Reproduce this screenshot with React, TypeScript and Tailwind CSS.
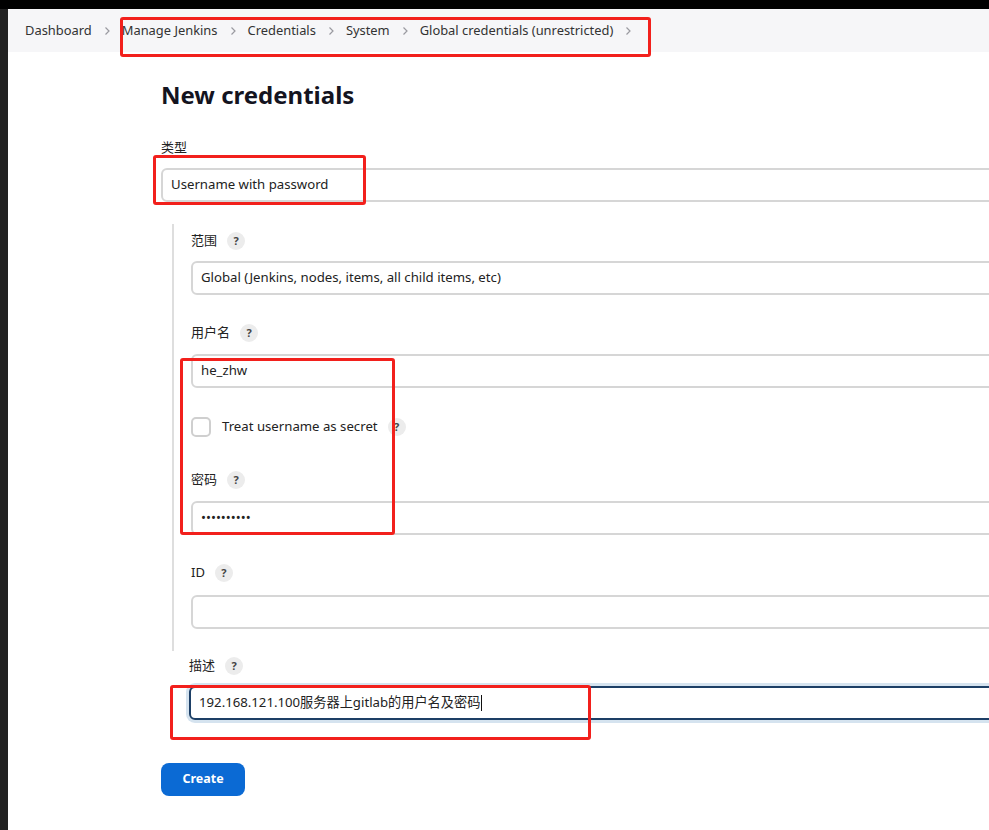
import React from 'react';

const crumbs = ['Dashboard', 'Manage Jenkins', 'Credentials', 'System', 'Global credentials (unrestricted)'];

const Chevron = () => (
  <svg width="10" height="10" viewBox="0 0 10 10" className="mx-[10px]">
    <path d="M3.5 1.5 L7 5 L3.5 8.5" fill="none" stroke="#9a9aa0" strokeWidth="1.2" />
  </svg>
);

const Help = () => (
  <span className="ml-[10px] inline-flex h-[18px] w-[18px] items-center justify-center rounded-full bg-[#ececec] text-[11px] font-bold text-[#444]">
    ?
  </span>
);

const Label = ({ text }: { text: string }) => (
  <div className="flex h-[20px] items-center text-[13px] text-[#222]">
    <span>{text}</span>
    <Help />
  </div>
);

const Field = ({ value, focused }: { value?: string; focused?: boolean }) => (
  <div
    className={`flex h-[34px] w-[900px] items-center rounded-[6px] px-[8px] text-[13.2px] text-[#222] ${
      focused ? 'border-2 border-[#1d3f66] shadow-[0_0_0_3px_#d5e3ef]' : 'border-2 border-[#d6d6d6]'
    }`}
  >
    {value}
    {focused && <span className="ml-[1px] h-[16px] w-[1px] bg-[#111]" />}
  </div>
);

export default function App() {
  return (
    <div
      className="flex h-[830px] w-[989px] flex-col overflow-hidden bg-black"
      style={{ fontFamily: '"Noto Sans", "Noto Sans CJK SC", sans-serif' }}
    >
      <div className="h-[9px] shrink-0 bg-black" />
      <div className="flex flex-1">
        <div className="w-[8px] shrink-0 bg-[#222]" />
        <div className="relative flex-1 overflow-hidden bg-white">
          {/* breadcrumb */}
          <div className="flex h-[43px] items-center bg-[#f6f6f8] pl-[17px] text-[12.9px] text-[#333]">
            {crumbs.map((c) => (
              <React.Fragment key={c}>
                <span>{c}</span>
                <Chevron />
              </React.Fragment>
            ))}
          </div>

          <div className="pl-[153px]">
            <h1 className="mt-[27px] text-[24px] font-bold leading-[32px] text-[#14141f]">New credentials</h1>

            <div className="mt-[26px] text-[13px] leading-[20px] text-[#222]">类型</div>
            <div className="mt-[11px] flex h-[34px] w-[900px] items-center rounded-[6px] border-2 border-[#d6d6d6] px-[8px] text-[13.2px] text-[#222]">
              Username with password
            </div>

            <div className="ml-[11px] mt-[22px] flex flex-col border-l-2 border-[#dedede] pl-[17px] pt-[7px] pb-[22px]">
              <Label text="范围" />
              <div className="mt-[10px]">
                <Field value="Global (Jenkins, nodes, items, all child items, etc)" />
              </div>

              <div className="mt-[28px]">
                <Label text="用户名" />
              </div>
              <div className="mt-[11px]">
                <Field value="he_zhw" />
              </div>

              <div className="mt-[29px] flex items-center">
                <span className="h-[20px] w-[20px] rounded-[5px] border-2 border-[#cfcfcf] bg-white" />
                <span className="ml-[11px] text-[13.2px] text-[#222]">Treat username as secret</span>
                <Help />
              </div>

              <div className="mt-[33px]">
                <Label text="密码" />
              </div>
              <div className="mt-[11px]">
                <Field value="••••••••••" />
              </div>

              <div className="mt-[28px]">
                <Label text="ID" />
              </div>
              <div className="mt-[12px]">
                <Field />
              </div>
            </div>

            <div className="ml-[28px] mt-[5px]">
              <Label text="描述" />
            </div>
            <div className="ml-[28px] mt-[10px]">
              <Field value="192.168.121.100服务器上gitlab的用户名及密码" focused />
            </div>

            <button className="mt-[43px] h-[33px] w-[84px] rounded-[8px] bg-[#0b6ad4] text-[12.5px] font-bold text-white">
              Create
            </button>
          </div>

          {/* annotation boxes */}
          <div className="absolute left-[112px] top-[8px] h-[40px] w-[531px] rounded-[3px] border-[3px] border-[#f2201c]" />
          <div className="absolute left-[145px] top-[146px] h-[50px] w-[213px] rounded-[3px] border-[3px] border-[#f2201c]" />
          <div className="absolute left-[172px] top-[349px] h-[177px] w-[215px] rounded-[3px] border-[3px] border-[#f2201c]" />
          <div className="absolute left-[162px] top-[676px] h-[55px] w-[421px] rounded-[3px] border-[3px] border-[#f2201c]" />
        </div>
      </div>
    </div>
  );
}
